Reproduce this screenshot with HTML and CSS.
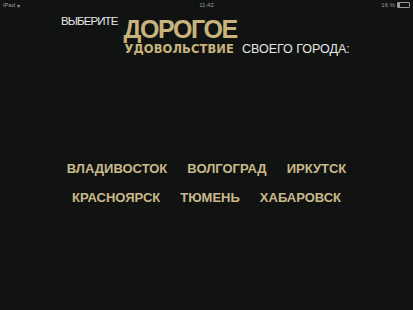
FILE: index.html
```html
<!DOCTYPE html>
<html lang="ru">
<head>
    <meta charset="UTF-8">
    <meta name="viewport" content="width=device-width, initial-scale=1.0">
    <title>Дорогое удовольствие</title>
    <link rel="stylesheet" href="styles.css">
</head>
<body>
    <div class="status">
        <div class="status-left">iPad <span class="wifi">&#9662;</span></div>
        <div class="status-time">11:42</div>
        <div class="status-right">16 % <span class="battery"><span class="battery-fill"></span></span></div>
    </div>

    <div class="title">
        <div class="pick">ВЫБЕРИТЕ</div>
        <div class="brand">
            <div class="big">ДОРОГОЕ</div>
            <div class="line">
                <span class="small">УДОВОЛЬСТВИЕ</span>
                <span class="city-word">СВОЕГО ГОРОДА:</span>
            </div>
        </div>
    </div>

    <div class="cities">
        <div class="row">
            <a class="city">ВЛАДИВОСТОК</a>
            <a class="city">ВОЛГОГРАД</a>
            <a class="city">ИРКУТСК</a>
        </div>
        <div class="row">
            <a class="city">КРАСНОЯРСК</a>
            <a class="city">ТЮМЕНЬ</a>
            <a class="city">ХАБАРОВСК</a>
        </div>
    </div>
</body>
</html>
```

FILE: styles.css
```css
body {
    margin: 0;
    padding: 0;
    background-color: #111312;
    font-family: "Liberation Sans", Arial, sans-serif;
    color: #e6e6e6;
    height: 310px;
    overflow: hidden;
}
.status {
    height: 10px;
    display: flex;
    justify-content: space-between;
    align-items: center;
    padding: 0 3px;
    font-size: 6px;
    color: #9a9a9a;
}
.status-left, .status-right {
    width: 60px;
    display: flex;
    align-items: center;
    gap: 2px;
}
.status-right {
    justify-content: flex-end;
}
.wifi {
    font-size: 6px;
}
.battery {
    display: inline-block;
    width: 11px;
    height: 4px;
    border: 1px solid #9a9a9a;
    border-radius: 1px;
}
.battery-fill {
    display: block;
    width: 2px;
    height: 4px;
    background: #9a9a9a;
}
.title {
    display: flex;
    padding-left: 61px;
    margin-top: 4px;
}
.pick {
    font-size: 11.5px;
    letter-spacing: -0.9px;
    margin-top: 1px;
    margin-right: 6px;
}
.brand {
    display: flex;
    flex-direction: column;
}
.big {
    font-size: 25px;
    font-weight: bold;
    letter-spacing: -1.4px;
    color: #c8b37c;
    line-height: 24px;
    margin-top: 3px;
}
.line {
    display: flex;
    align-items: baseline;
    margin-top: 1px;
}
.small {
    font-family: "DejaVu Sans", sans-serif;
    font-size: 11.5px;
    font-weight: bold;
    color: #c8b37c;
    letter-spacing: 0.1px;
    margin-left: 1px;
}
.city-word {
    font-size: 12.5px;
    letter-spacing: 0;
    margin-left: 8px;
}
.cities {
    margin-top: 105px;
    display: flex;
    flex-direction: column;
    align-items: center;
    gap: 14px;
}
.row {
    display: flex;
    gap: 20px;
}
.city {
    font-size: 13px;
    font-weight: bold;
    color: #c9b98a;
    cursor: pointer;
}
```
